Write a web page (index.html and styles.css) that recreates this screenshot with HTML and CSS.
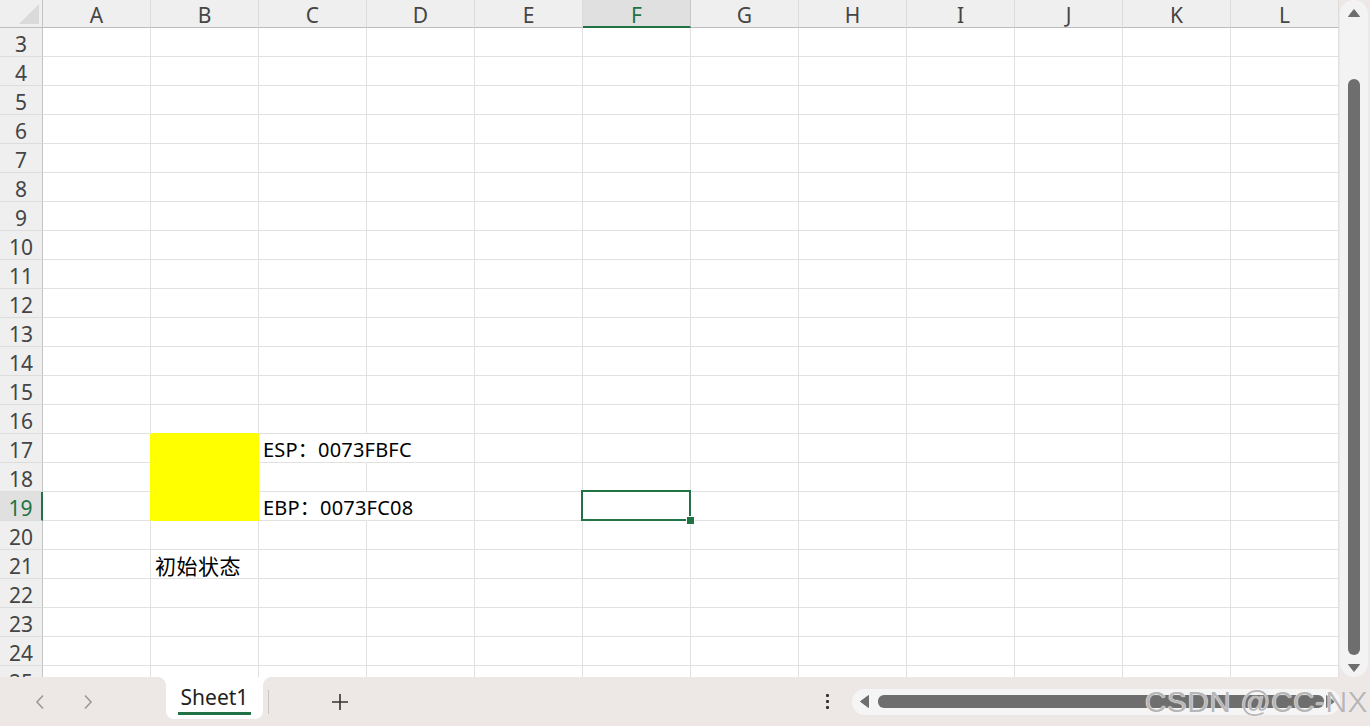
FILE: index.html
```html
<!DOCTYPE html>
<html lang="zh-CN">
<head>
<meta charset="utf-8">
<title>Sheet1</title>
<link rel="stylesheet" href="styles.css">
</head>
<body>
<div class="app">
  <div class="main">
    <div class="sheet">
      <div class="hrow">
        <div class="corner"><svg class="corner-tri" width="43" height="28" viewBox="0 0 43 28"><polygon points="19,24 39,24 39,4" fill="#dadada"/></svg></div>
        <div class="ch">A</div><div class="ch">B</div><div class="ch">C</div><div class="ch">D</div><div class="ch">E</div><div class="ch ch-sel">F</div><div class="ch">G</div><div class="ch">H</div><div class="ch">I</div><div class="ch">J</div><div class="ch">K</div><div class="ch">L</div>
      </div>
      <div class="row"><div class="rh">3</div><div class="c"></div><div class="c"></div><div class="c"></div><div class="c"></div><div class="c"></div><div class="c"></div><div class="c"></div><div class="c"></div><div class="c"></div><div class="c"></div><div class="c"></div><div class="c"></div></div>
      <div class="row"><div class="rh">4</div><div class="c"></div><div class="c"></div><div class="c"></div><div class="c"></div><div class="c"></div><div class="c"></div><div class="c"></div><div class="c"></div><div class="c"></div><div class="c"></div><div class="c"></div><div class="c"></div></div>
      <div class="row"><div class="rh">5</div><div class="c"></div><div class="c"></div><div class="c"></div><div class="c"></div><div class="c"></div><div class="c"></div><div class="c"></div><div class="c"></div><div class="c"></div><div class="c"></div><div class="c"></div><div class="c"></div></div>
      <div class="row"><div class="rh">6</div><div class="c"></div><div class="c"></div><div class="c"></div><div class="c"></div><div class="c"></div><div class="c"></div><div class="c"></div><div class="c"></div><div class="c"></div><div class="c"></div><div class="c"></div><div class="c"></div></div>
      <div class="row"><div class="rh">7</div><div class="c"></div><div class="c"></div><div class="c"></div><div class="c"></div><div class="c"></div><div class="c"></div><div class="c"></div><div class="c"></div><div class="c"></div><div class="c"></div><div class="c"></div><div class="c"></div></div>
      <div class="row"><div class="rh">8</div><div class="c"></div><div class="c"></div><div class="c"></div><div class="c"></div><div class="c"></div><div class="c"></div><div class="c"></div><div class="c"></div><div class="c"></div><div class="c"></div><div class="c"></div><div class="c"></div></div>
      <div class="row"><div class="rh">9</div><div class="c"></div><div class="c"></div><div class="c"></div><div class="c"></div><div class="c"></div><div class="c"></div><div class="c"></div><div class="c"></div><div class="c"></div><div class="c"></div><div class="c"></div><div class="c"></div></div>
      <div class="row"><div class="rh">10</div><div class="c"></div><div class="c"></div><div class="c"></div><div class="c"></div><div class="c"></div><div class="c"></div><div class="c"></div><div class="c"></div><div class="c"></div><div class="c"></div><div class="c"></div><div class="c"></div></div>
      <div class="row"><div class="rh">11</div><div class="c"></div><div class="c"></div><div class="c"></div><div class="c"></div><div class="c"></div><div class="c"></div><div class="c"></div><div class="c"></div><div class="c"></div><div class="c"></div><div class="c"></div><div class="c"></div></div>
      <div class="row"><div class="rh">12</div><div class="c"></div><div class="c"></div><div class="c"></div><div class="c"></div><div class="c"></div><div class="c"></div><div class="c"></div><div class="c"></div><div class="c"></div><div class="c"></div><div class="c"></div><div class="c"></div></div>
      <div class="row"><div class="rh">13</div><div class="c"></div><div class="c"></div><div class="c"></div><div class="c"></div><div class="c"></div><div class="c"></div><div class="c"></div><div class="c"></div><div class="c"></div><div class="c"></div><div class="c"></div><div class="c"></div></div>
      <div class="row"><div class="rh">14</div><div class="c"></div><div class="c"></div><div class="c"></div><div class="c"></div><div class="c"></div><div class="c"></div><div class="c"></div><div class="c"></div><div class="c"></div><div class="c"></div><div class="c"></div><div class="c"></div></div>
      <div class="row"><div class="rh">15</div><div class="c"></div><div class="c"></div><div class="c"></div><div class="c"></div><div class="c"></div><div class="c"></div><div class="c"></div><div class="c"></div><div class="c"></div><div class="c"></div><div class="c"></div><div class="c"></div></div>
      <div class="row"><div class="rh">16</div><div class="c"></div><div class="c c-ybottom"></div><div class="c"></div><div class="c"></div><div class="c"></div><div class="c"></div><div class="c"></div><div class="c"></div><div class="c"></div><div class="c"></div><div class="c"></div><div class="c"></div></div>
      <div class="row"><div class="rh">17</div><div class="c c-yright"></div><div class="c c-yellow"></div><div class="c c-over">ESP：0073FBFC</div><div class="c"></div><div class="c"></div><div class="c"></div><div class="c"></div><div class="c"></div><div class="c"></div><div class="c"></div><div class="c"></div><div class="c"></div></div>
      <div class="row"><div class="rh">18</div><div class="c c-yright"></div><div class="c c-yellow"></div><div class="c"></div><div class="c"></div><div class="c"></div><div class="c"></div><div class="c"></div><div class="c"></div><div class="c"></div><div class="c"></div><div class="c"></div><div class="c"></div></div>
      <div class="row"><div class="rh rh-sel">19</div><div class="c c-yright"></div><div class="c c-yellow"></div><div class="c c-over">EBP：0073FC08</div><div class="c"></div><div class="c"></div><div class="c c-active"><span class="selbox"><span class="fill-handle"></span></span></div><div class="c"></div><div class="c"></div><div class="c"></div><div class="c"></div><div class="c"></div><div class="c"></div></div>
      <div class="row"><div class="rh">20</div><div class="c"></div><div class="c"></div><div class="c"></div><div class="c"></div><div class="c"></div><div class="c"></div><div class="c"></div><div class="c"></div><div class="c"></div><div class="c"></div><div class="c"></div><div class="c"></div></div>
      <div class="row"><div class="rh">21</div><div class="c"></div><div class="c c-cjk">初始状态</div><div class="c"></div><div class="c"></div><div class="c"></div><div class="c"></div><div class="c"></div><div class="c"></div><div class="c"></div><div class="c"></div><div class="c"></div><div class="c"></div></div>
      <div class="row"><div class="rh">22</div><div class="c"></div><div class="c"></div><div class="c"></div><div class="c"></div><div class="c"></div><div class="c"></div><div class="c"></div><div class="c"></div><div class="c"></div><div class="c"></div><div class="c"></div><div class="c"></div></div>
      <div class="row"><div class="rh">23</div><div class="c"></div><div class="c"></div><div class="c"></div><div class="c"></div><div class="c"></div><div class="c"></div><div class="c"></div><div class="c"></div><div class="c"></div><div class="c"></div><div class="c"></div><div class="c"></div></div>
      <div class="row"><div class="rh">24</div><div class="c"></div><div class="c"></div><div class="c"></div><div class="c"></div><div class="c"></div><div class="c"></div><div class="c"></div><div class="c"></div><div class="c"></div><div class="c"></div><div class="c"></div><div class="c"></div></div>
      <div class="row"><div class="rh">25</div><div class="c"></div><div class="c"></div><div class="c"></div><div class="c"></div><div class="c"></div><div class="c"></div><div class="c"></div><div class="c"></div><div class="c"></div><div class="c"></div><div class="c"></div><div class="c"></div></div>
    </div>
    <div class="vscroll">
      <div class="vtrack">
        <svg class="arrow-up" width="12" height="8" viewBox="0 0 12 8"><path d="M6 0.5 L11.5 7.5 L0.5 7.5 Z" fill="#6e6e6e" stroke="#6e6e6e" stroke-linejoin="round"/></svg>
        <div class="vthumb"></div>
        <svg class="arrow-down" width="12" height="8" viewBox="0 0 12 8"><path d="M0.5 0.5 L11.5 0.5 L6 7.5 Z" fill="#6e6e6e" stroke="#6e6e6e" stroke-linejoin="round"/></svg>
      </div>
    </div>
  </div>
  <div class="tabbar">
    <div class="nav nav-first"><svg width="10" height="16" viewBox="0 0 10 16"><path d="M8 1.5 L2 8 L8 14.5" fill="none" stroke="#9a9a9a" stroke-width="1.6"/></svg></div>
    <div class="nav"><svg width="10" height="16" viewBox="0 0 10 16"><path d="M2 1.5 L8 8 L2 14.5" fill="none" stroke="#9a9a9a" stroke-width="1.6"/></svg></div>
    <div class="tab"><span class="tab-label">Sheet1</span><span class="tab-line"></span></div>
    <div class="divider"></div>
    <div class="addsheet"><svg width="18" height="18" viewBox="0 0 18 18"><path d="M9 1 V17 M1 9 H17" stroke="#333" stroke-width="1.6"/></svg></div>
    <div class="more"><span class="dot"></span><span class="dot"></span><span class="dot"></span></div>
    <div class="htrack">
      <svg class="arrow-left" width="9" height="13" viewBox="0 0 9 13"><path d="M8.5 0.5 L8.5 12.5 L0.5 6.5 Z" fill="#6e6e6e" stroke="#6e6e6e" stroke-linejoin="round"/></svg>
      <div class="hthumb"></div>
      <svg class="arrow-right" width="9" height="13" viewBox="0 0 9 13"><path d="M0.5 0.5 L0.5 12.5 L8.5 6.5 Z" fill="#6e6e6e" stroke="#6e6e6e" stroke-linejoin="round"/></svg>
    </div>
    <div class="watermark">CSDN @CC-NX</div>
  </div>
</div>
</body>
</html>
```

FILE: styles.css
```css
* {
  box-sizing: border-box;
  margin: 0;
  padding: 0;
}

html, body {
  width: 1370px;
  height: 726px;
  overflow: hidden;
  background: #ede8e6;
}

body {
  font-family: "Noto Sans", "Noto Sans CJK SC", sans-serif;
  color: #000;
}

.app {
  display: flex;
  flex-direction: column;
  height: 726px;
}

.main {
  display: flex;
  height: 677px;
  flex: none;
}

.sheet {
  width: 1339px;
  height: 677px;
  overflow: hidden;
  background: #fff;
  display: flex;
  flex-direction: column;
  flex: none;
}

.hrow {
  display: flex;
  height: 28px;
  flex: none;
  background: #efefef;
}

.corner {
  width: 43px;
  flex: none;
  border-right: 1px solid #c4c4c4;
  border-bottom: 1px solid #bcbcbc;
  position: relative;
}

.corner-tri {
  position: absolute;
  left: 0;
  top: 0;
}

.ch {
  width: 108px;
  flex: none;
  border-right: 1px solid #dcdcdc;
  border-bottom: 1px solid #bcbcbc;
  text-align: center;
  font-size: 21px;
  line-height: 26px;
  padding-top: 2px;
  color: #454545;
}

.ch-sel {
  background: #e0e0e0;
  color: #217346;
  border-bottom: 2px solid #217346;
  border-right-color: #c8c8c8;
}

.row {
  display: flex;
  height: 29px;
  flex: none;
}

.rh {
  width: 43px;
  flex: none;
  background: #efefef;
  border-right: 1px solid #c4c4c4;
  border-bottom: 1px solid #dcdcdc;
  text-align: center;
  font-size: 21px;
  line-height: 28px;
  padding-top: 2px;
  color: #454545;
}

.rh-sel {
  background: #e0e0e0;
  color: #217346;
  border-right: 2px solid #217346;
}

.c {
  width: 108px;
  flex: none;
  border-right: 1px solid #e1e1e1;
  border-bottom: 1px solid #e1e1e1;
  font-size: 20px;
  line-height: 28px;
  padding-top: 2px;
  padding-left: 4px;
  white-space: nowrap;
  position: relative;
}

.c-yellow {
  background: #ffff00;
  border-right-color: #ffff00;
  border-bottom-color: #ffff00;
}

.c-yright {
  border-right-color: #ffff00;
}

.c-ybottom {
  border-bottom-color: #ffff00;
}

.c-over {
  border-right-color: transparent;
  z-index: 1;
  overflow: visible;
  letter-spacing: 0.2px;
}

.c-cjk {
  font-size: 21px;
  letter-spacing: 0.5px;
}

.c-active {
  z-index: 2;
}

.selbox {
  position: absolute;
  left: -2px;
  top: -2px;
  right: -1px;
  bottom: -1px;
  border: 2px solid #217346;
}

.fill-handle {
  position: absolute;
  right: -5px;
  bottom: -5px;
  width: 7px;
  height: 7px;
  background: #217346;
  box-shadow: 0 0 0 1px #fff;
}

.vscroll {
  flex: 1;
  padding: 0 2px 0 1px;
  display: flex;
}

.vtrack {
  flex: 1;
  background: #f4f3f3;
  border-radius: 14px;
  display: flex;
  flex-direction: column;
  align-items: center;
  padding-top: 9px;
}

.vthumb {
  width: 12px;
  height: 576px;
  margin-top: 62px;
  border-radius: 6px;
  background: #6e6e6e;
}

.arrow-down {
  margin-top: 9px;
}

.tabbar {
  height: 49px;
  flex: none;
  display: flex;
  align-items: center;
  position: relative;
  padding-left: 16px;
}

.nav {
  width: 48px;
  height: 42px;
  display: flex;
  align-items: center;
  justify-content: center;
}

.tab {
  align-self: flex-start;
  margin-left: 54px;
  width: 97px;
  height: 42px;
  background: #fff;
  border-radius: 0 0 8px 8px;
  position: relative;
  display: flex;
  justify-content: center;
  padding-top: 6px;
}

.tab::before,
.tab::after {
  content: "";
  position: absolute;
  top: 0;
  width: 8px;
  height: 8px;
}

.tab::before {
  left: -8px;
  background: radial-gradient(circle 8px at 0 100%, #ede8e6 94%, #fff 100%);
}

.tab::after {
  right: -8px;
  background: radial-gradient(circle 8px at 100% 100%, #ede8e6 94%, #fff 100%);
}

.tab-label {
  font-size: 21px;
  line-height: 28px;
  color: #222;
}

.tab-line {
  position: absolute;
  left: 12px;
  right: 12px;
  bottom: 4px;
  height: 3px;
  background: #217346;
}

.divider {
  width: 1px;
  height: 24px;
  margin-left: 5px;
  background: #c9c5c4;
}

.addsheet {
  width: 48px;
  height: 42px;
  margin-left: 47px;
  display: flex;
  align-items: center;
  justify-content: center;
}

.more {
  margin-left: auto;
  width: 20px;
  display: flex;
  flex-direction: column;
  align-items: center;
  gap: 3px;
  margin-right: 15px;
}

.dot {
  width: 3px;
  height: 3px;
  background: #333;
  border-radius: 1px;
}

.htrack {
  width: 488px;
  height: 26px;
  margin-right: 30px;
  background: #f6f5f5;
  border-radius: 13px;
  display: flex;
  align-items: center;
  padding-left: 8px;
  padding-right: 5px;
}

.hthumb {
  height: 13px;
  width: 446px;
  margin-left: 9px;
  margin-right: 2px;
  border-radius: 6px;
  background: #6e6e6e;
}

.watermark {
  position: absolute;
  right: 2px;
  top: 10px;
  font-family: "Liberation Sans", Arial, sans-serif;
  font-size: 30px;
  line-height: 30px;
  color: rgba(170, 170, 170, 0.85);
  text-shadow: 0 0 1px #fff, 0 0 1px #fff;
  letter-spacing: 0.4px;
}
```
